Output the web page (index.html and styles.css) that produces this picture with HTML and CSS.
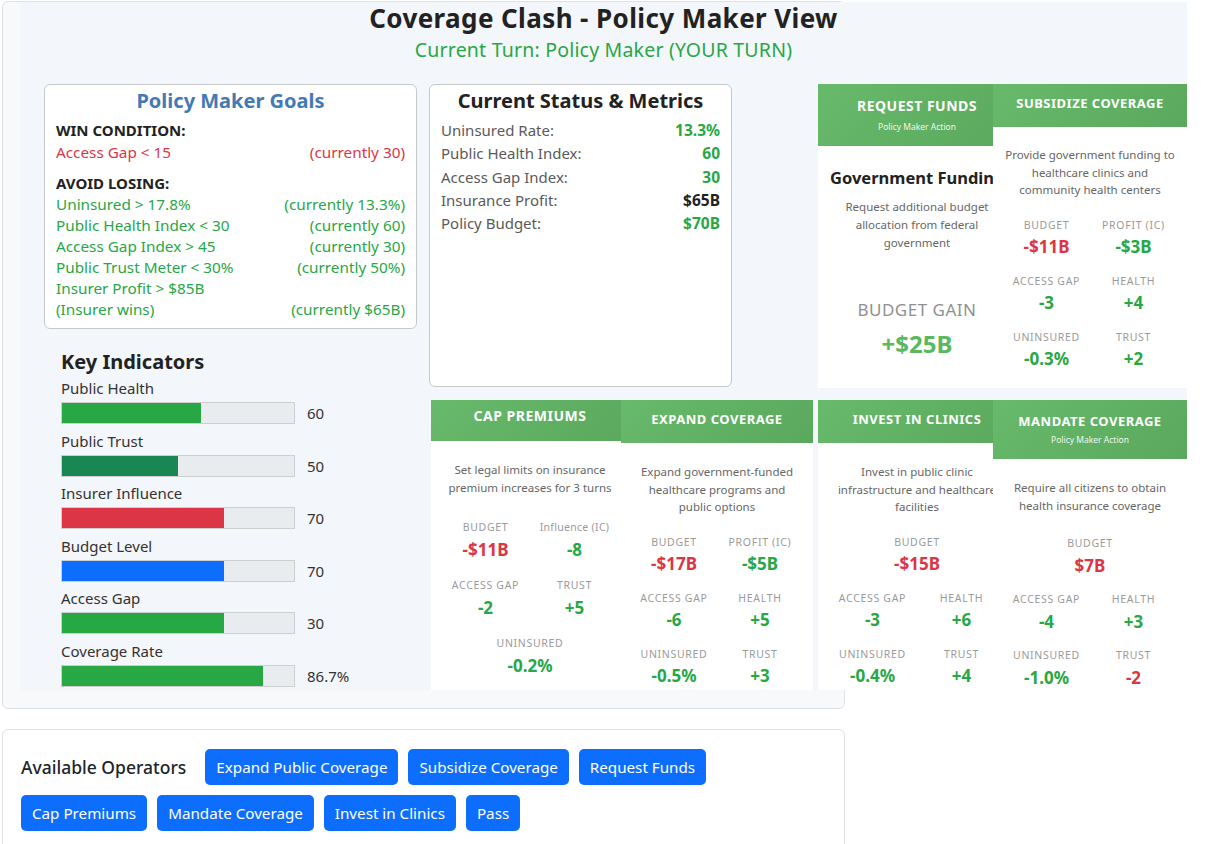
FILE: index.html
```html
<!DOCTYPE html>
<html lang="en">
<head>
<meta charset="utf-8">
<title>Coverage Clash - Policy Maker View</title>
<link rel="stylesheet" href="styles.css">
</head>
<body>
<div class="page">
  <section class="game-panel">
    <div class="board">
      <header class="board-head">
        <h1 class="title">Coverage Clash - Policy Maker View</h1>
        <p class="turn">Current Turn: Policy Maker (YOUR TURN)</p>
      </header>
      <div class="board-main">
        <div class="left-col">
          <div class="goals">
            <h3 class="goals-title">Policy Maker Goals</h3>
            <div class="goal-head">WIN CONDITION:</div>
            <div class="goal-row red first"><span>Access Gap &lt; 15</span><span>(currently 30)</span></div>
            <div class="goal-head gap">AVOID LOSING:</div>
            <div class="goal-row green"><span>Uninsured &gt; 17.8%</span><span>(currently 13.3%)</span></div>
            <div class="goal-row green"><span>Public Health Index &lt; 30</span><span>(currently 60)</span></div>
            <div class="goal-row green"><span>Access Gap Index &gt; 45</span><span>(currently 30)</span></div>
            <div class="goal-row green"><span>Public Trust Meter &lt; 30%</span><span>(currently 50%)</span></div>
            <div class="goal-row green"><span class="wrap">Insurer Profit &gt; $85B (Insurer wins)</span><span>(currently $65B)</span></div>
          </div>
          <div class="key">
            <h3 class="key-title">Key Indicators</h3>
            <div class="ind">
              <div class="ind-label">Public Health</div>
              <div class="ind-row"><div class="bar"><div class="fill green" style="width:60%"></div></div><span class="ind-val">60</span></div>
            </div>
            <div class="ind">
              <div class="ind-label">Public Trust</div>
              <div class="ind-row"><div class="bar"><div class="fill teal" style="width:50%"></div></div><span class="ind-val">50</span></div>
            </div>
            <div class="ind">
              <div class="ind-label">Insurer Influence</div>
              <div class="ind-row"><div class="bar"><div class="fill red" style="width:70%"></div></div><span class="ind-val">70</span></div>
            </div>
            <div class="ind">
              <div class="ind-label">Budget Level</div>
              <div class="ind-row"><div class="bar"><div class="fill blue" style="width:70%"></div></div><span class="ind-val">70</span></div>
            </div>
            <div class="ind">
              <div class="ind-label">Access Gap</div>
              <div class="ind-row"><div class="bar"><div class="fill green" style="width:70%"></div></div><span class="ind-val">30</span></div>
            </div>
            <div class="ind">
              <div class="ind-label">Coverage Rate</div>
              <div class="ind-row"><div class="bar"><div class="fill green" style="width:86.7%"></div></div><span class="ind-val">86.7%</span></div>
            </div>
          </div>
        </div>

        <div class="cards-grid">
          <div class="status">
            <h3 class="status-title">Current Status &amp; Metrics</h3>
            <div class="status-row"><span>Uninsured Rate:</span><b class="green">13.3%</b></div>
            <div class="status-row"><span>Public Health Index:</span><b class="green">60</b></div>
            <div class="status-row"><span>Access Gap Index:</span><b class="green">30</b></div>
            <div class="status-row"><span>Insurance Profit:</span><b class="dark">$65B</b></div>
            <div class="status-row"><span>Policy Budget:</span><b class="green">$70B</b></div>
          </div>

          <div class="card card-request">
            <div class="card-head with-sub sub-low">
              <div class="card-name big">REQUEST FUNDS</div>
              <div class="card-sub">Policy Maker Action</div>
            </div>
            <div class="card-body fund-body">
              <div class="fund-title">Government Funding</div>
              <p class="desc">Request additional budget allocation from federal government</p>
              <div class="gain-label">BUDGET GAIN</div>
              <div class="gain-val">+$25B</div>
            </div>
          </div>

          <div class="card card-subsidize">
            <div class="card-head">
              <div class="card-name">SUBSIDIZE COVERAGE</div>
            </div>
            <div class="card-body tight">
              <p class="desc">Provide government funding to healthcare clinics and community health centers</p>
              <div class="stats">
                <div class="stat"><div class="lbl">Budget</div><div class="val red">-$11B</div></div>
                <div class="stat"><div class="lbl">Profit (IC)</div><div class="val green">-$3B</div></div>
                <div class="stat"><div class="lbl">Access Gap</div><div class="val green">-3</div></div>
                <div class="stat"><div class="lbl">Health</div><div class="val green">+4</div></div>
                <div class="stat"><div class="lbl">Uninsured</div><div class="val green">-0.3%</div></div>
                <div class="stat"><div class="lbl">Trust</div><div class="val green">+2</div></div>
              </div>
            </div>
          </div>

          <div class="card card-cap">
            <div class="card-head head-high">
              <div class="card-name big">CAP PREMIUMS</div>
            </div>
            <div class="card-body">
              <p class="desc desc-wide">Set legal limits on insurance premium increases for 3 turns</p>
              <div class="stats loose">
                <div class="stat"><div class="lbl">Budget</div><div class="val red">-$11B</div></div>
                <div class="stat"><div class="lbl mixed">Influence (IC)</div><div class="val green">-8</div></div>
                <div class="stat"><div class="lbl">Access Gap</div><div class="val green">-2</div></div>
                <div class="stat"><div class="lbl">Trust</div><div class="val green">+5</div></div>
                <div class="stat full"><div class="lbl">Uninsured</div><div class="val green">-0.2%</div></div>
              </div>
            </div>
          </div>

          <div class="card card-expand">
            <div class="card-head">
              <div class="card-name">EXPAND COVERAGE</div>
            </div>
            <div class="card-body">
              <p class="desc">Expand government-funded healthcare programs and public options</p>
              <div class="stats">
                <div class="stat"><div class="lbl">Budget</div><div class="val red">-$17B</div></div>
                <div class="stat"><div class="lbl">Profit (IC)</div><div class="val green">-$5B</div></div>
                <div class="stat"><div class="lbl">Access Gap</div><div class="val green">-6</div></div>
                <div class="stat"><div class="lbl">Health</div><div class="val green">+5</div></div>
                <div class="stat"><div class="lbl">Uninsured</div><div class="val green">-0.5%</div></div>
                <div class="stat"><div class="lbl">Trust</div><div class="val green">+3</div></div>
              </div>
            </div>
          </div>

          <div class="card card-invest">
            <div class="card-head">
              <div class="card-name">INVEST IN CLINICS</div>
            </div>
            <div class="card-body">
              <p class="desc">Invest in public clinic infrastructure and healthcare facilities</p>
              <div class="stats">
                <div class="stat full"><div class="lbl">Budget</div><div class="val red">-$15B</div></div>
                <div class="stat"><div class="lbl">Access Gap</div><div class="val green">-3</div></div>
                <div class="stat"><div class="lbl">Health</div><div class="val green">+6</div></div>
                <div class="stat"><div class="lbl">Uninsured</div><div class="val green">-0.4%</div></div>
                <div class="stat"><div class="lbl">Trust</div><div class="val green">+4</div></div>
              </div>
            </div>
          </div>

          <div class="card card-mandate">
            <div class="card-head with-sub">
              <div class="card-name">MANDATE COVERAGE</div>
              <div class="card-sub">Policy Maker Action</div>
            </div>
            <div class="card-body">
              <p class="desc desc-mid">Require all citizens to obtain health insurance coverage</p>
              <div class="stats">
                <div class="stat full"><div class="lbl">Budget</div><div class="val red">$7B</div></div>
                <div class="stat"><div class="lbl">Access Gap</div><div class="val green">-4</div></div>
                <div class="stat"><div class="lbl">Health</div><div class="val green">+3</div></div>
                <div class="stat"><div class="lbl">Uninsured</div><div class="val green">-1.0%</div></div>
                <div class="stat"><div class="lbl">Trust</div><div class="val red">-2</div></div>
              </div>
            </div>
          </div>
        </div>
      </div>
    </div>
  </section>

  <section class="operators">
    <span class="ops-title">Available Operators</span>
    <button class="op-btn">Expand Public Coverage</button>
    <button class="op-btn">Subsidize Coverage</button>
    <button class="op-btn">Request Funds</button>
    <button class="op-btn">Cap Premiums</button>
    <button class="op-btn">Mandate Coverage</button>
    <button class="op-btn">Invest in Clinics</button>
    <button class="op-btn">Pass</button>
  </section>
</div>
</body>
</html>
```

FILE: styles.css
```css
* { box-sizing: border-box; }

body {
  margin: 0;
  font-family: "Noto Sans", "Open Sans", sans-serif;
  color: #212529;
  background: #ffffff;
}

.page {
  padding: 1px 0 40px 2px;
  width: 845px;
}

/* outer panel */
.game-panel {
  width: 843px;
  border: 1px solid #dee2e6;
  border-radius: 6px;
  background: #f8f9fa;
  padding: 0 0 18px 17px;
}

.board {
  width: 1167px;
  background: #f3f6fa;
}

.board-head { text-align: center; }

.title {
  margin: 0;
  font-size: 26px;
  line-height: 32px;
  letter-spacing: 0.4px;
  font-weight: 700;
  color: #222;
}

.turn {
  margin: 1.5px 0 0;
  font-size: 19.5px;
  line-height: 27px;
  letter-spacing: 0.2px;
  color: #28a745;
}

.board-main {
  display: flex;
  align-items: flex-start;
  gap: 12px;
  padding-left: 24px;
  margin-top: 21.5px;
}

.left-col { width: 373px; flex: none; }

/* goals */
.goals {
  background: #fff;
  border: 1px solid #c8c8c8;
  border-radius: 6px;
  padding: 4px 11px 7px;
  height: 245px;
}

.goals-title {
  margin: 0 0 7px;
  text-align: center;
  font-size: 20px;
  line-height: 24px;
  font-weight: 700;
  color: #4479b4;
}

.goal-head {
  font-size: 15px;
  line-height: 21px;
  font-weight: 700;
  color: #222;
}

.goal-head.gap { margin-top: 10px; }

.goal-row {
  display: flex;
  justify-content: space-between;
  align-items: flex-end;
  gap: 16px;
  font-size: 15.3px;
  line-height: 21px;
}

.goal-row.first { margin-top: 1px; }
.goal-row span:last-child { white-space: nowrap; }
.goal-row .wrap { max-width: 175px; }

.red { color: #dc3545; }
.green { color: #28a745; }
.dark { color: #222; }

/* key indicators */
.key { padding: 21px 0 0 17px; }

.key-title {
  margin: 0 0 4px;
  font-size: 20px;
  line-height: 24px;
  font-weight: 700;
  color: #222;
}

.ind { margin-bottom: 6.5px; }
.ind:last-child { margin-bottom: 0; }

.ind-label {
  font-size: 15px;
  line-height: 20px;
  color: #333;
  margin-bottom: 4px;
}

.ind-row {
  display: flex;
  align-items: center;
  gap: 12px;
}

.bar {
  width: 234px;
  height: 22px;
  border: 1px solid #cfcfcf;
  background: #e9ecef;
}

.fill { height: 100%; }
.fill.green { background: #28a745; }
.fill.teal { background: #198754; }
.fill.red { background: #dc3545; }
.fill.blue { background: #0d6efd; }

.ind-val {
  font-size: 15px;
  color: #333;
}

/* right grid */
.cards-grid {
  display: grid;
  grid-template-columns: 192px 197px 175px 194px;
  grid-template-rows: 304px 290px;
  row-gap: 12px;
  flex: none;
}

.status {
  grid-column: 1 / span 2;
  grid-row: 1;
  width: 303px;
  height: 303px;
  background: #fff;
  border: 1px solid #c8c8c8;
  border-radius: 6px;
  padding: 4px 11px;
}

.status-title {
  margin: 0 0 6px;
  text-align: center;
  font-size: 20px;
  line-height: 24px;
  font-weight: 700;
  color: #222;
}

.status-row {
  display: flex;
  justify-content: space-between;
  align-items: baseline;
  font-size: 15px;
  line-height: 23.3px;
  color: #5a5a5a;
}

.status-row b { font-weight: 700; font-size: 15.5px; }

/* action cards */
.card {
  background: #fff;
  display: flex;
  flex-direction: column;
  text-align: center;
  overflow: hidden;
}

.card-request { grid-column: 3; grid-row: 1; width: 198px; }
.card-subsidize { grid-column: 4; grid-row: 1; width: 194px; }
.card-cap { grid-column: 1; grid-row: 2; width: 198px; margin-left: 2px; }
.card-expand { grid-column: 2; grid-row: 2; width: 192px; }
.card-invest { grid-column: 3; grid-row: 2; width: 198px; }
.card-mandate { grid-column: 4; grid-row: 2; width: 194px; }

.card-head {
  background: linear-gradient(135deg, #68ba6b 0%, #5aa85d 100%);
  color: #fff;
  padding: 10px 8px 14px;
}

.card-head.head-high { padding: 6px 8px 16px; }
.card-head.with-sub { padding: 12px 8px 13px; }

.card-name {
  font-size: 13px;
  line-height: 19px;
  font-weight: 700;
  letter-spacing: 0.5px;
  white-space: nowrap;
}

.card-name.big { font-size: 14px; }

.card-sub {
  margin-top: 3px;
  font-size: 8.5px;
  line-height: 12px;
  color: #eef7ee;
}

.card-head.sub-low .card-sub { margin-top: 6px; }

.card-body { padding: 20px 10px 10px; }
.card-body.tight { padding-top: 19px; }

.desc {
  margin: 0 0 19px;
  font-size: 11.5px;
  line-height: 17.5px;
  color: #666;
}

.desc.desc-wide { margin-bottom: 24px; }
.desc.desc-mid { margin-bottom: 22px; }

.stats {
  display: grid;
  grid-template-columns: 1fr 1fr;
  row-gap: 15.5px;
}

.stats.loose { row-gap: 17.5px; }

.stat.full { grid-column: 1 / -1; }

.lbl {
  font-size: 10.5px;
  line-height: 15px;
  letter-spacing: 0.7px;
  color: #9a9a9a;
  text-transform: uppercase;
  white-space: nowrap;
}

.lbl.mixed { text-transform: none; letter-spacing: 0.3px; }

.val {
  margin-top: 3.5px;
  font-size: 17px;
  line-height: 22px;
  font-weight: 700;
}

/* request funds */
.fund-body { padding: 21px 12px 10px; }

.fund-title {
  font-size: 16.5px;
  line-height: 22px;
  font-weight: 700;
  color: #222;
  white-space: nowrap;
  margin-bottom: 9px;
}

.fund-body .desc {
  line-height: 18px;
  margin: 0;
}

.gain-label {
  margin-top: 46px;
  font-size: 17px;
  line-height: 24px;
  color: #909090;
  letter-spacing: 0.5px;
}

.gain-val {
  margin-top: 7px;
  font-size: 24px;
  line-height: 30px;
  font-weight: 700;
  color: #5cb85c;
}

/* operators */
.operators {
  margin-top: 20px;
  width: 843px;
  background: #fff;
  border: 1px solid #dee2e6;
  border-radius: 6px;
  padding: 19px 18px;
  display: flex;
  flex-wrap: wrap;
  align-items: center;
  gap: 10px;
}

.ops-title {
  font-size: 17.5px;
  font-weight: 500;
  color: #212529;
  margin-right: 9px;
}

.op-btn {
  font-family: inherit;
  font-size: 15.2px;
  line-height: 24px;
  padding: 6px 11px;
  background: #0d6efd;
  color: #fff;
  border: none;
  border-radius: 5px;
}
```
